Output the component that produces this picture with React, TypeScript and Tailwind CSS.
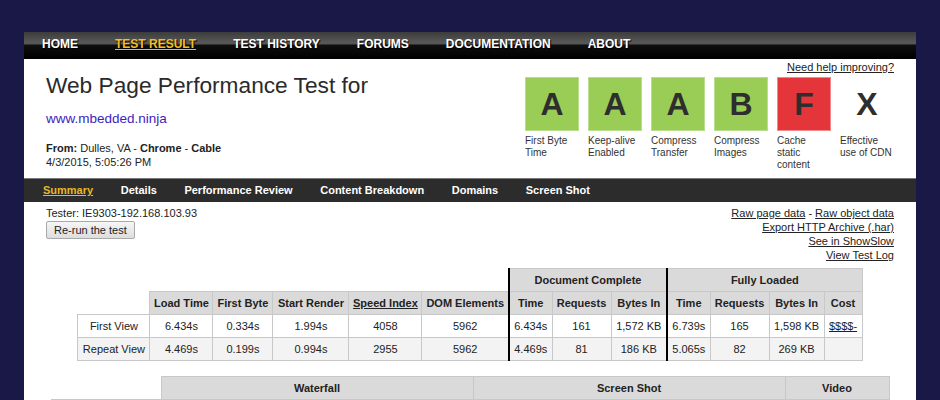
import React from "react";

const topNav = ["HOME", "TEST RESULT", "TEST HISTORY", "FORUMS", "DOCUMENTATION", "ABOUT"];
const subNav = ["Summary", "Details", "Performance Review", "Content Breakdown", "Domains", "Screen Shot"];

const grades = [
  { letter: "A", label: "First Byte Time", tone: "green" },
  { letter: "A", label: "Keep-alive Enabled", tone: "green" },
  { letter: "A", label: "Compress Transfer", tone: "green" },
  { letter: "B", label: "Compress Images", tone: "green" },
  { letter: "F", label: "Cache static content", tone: "red" },
  { letter: "X", label: "Effective use of CDN", tone: "none" },
];

const colWidths = [72, 63, 60, 76, 73, 87, 43, 59, 56, 43, 59, 55, 38];

const rows = [
  {
    name: "First View",
    bg: "bg-white",
    cells: ["6.434s", "0.334s", "1.994s", "4058", "5962", "6.434s", "161", "1,572 KB", "6.739s", "165", "1,598 KB", "$$$$-"],
  },
  {
    name: "Repeat View",
    bg: "bg-[#f3f3f3]",
    cells: ["4.469s", "0.199s", "0.994s", "2955", "5962", "4.469s", "81", "186 KB", "5.065s", "82", "269 KB", ""],
  },
];

const cell = "border border-[#c8c8c8] p-0 text-center";
const thick = "border-l-2 border-l-black";

function GradeBox({ letter, label, tone }: { letter: string; label: string; tone: string }) {
  const box =
    tone === "green"
      ? "bg-[#9acd55] border border-[#b9df8e]"
      : tone === "red"
        ? "bg-[#e4353a] border border-[#f08a8c]"
        : "";
  return (
    <div className="w-[54px]">
      <div className={`w-[54px] h-[54px] flex items-center justify-center text-[32px] font-bold text-[#2e2e2e] ${box}`}>
        {letter}
      </div>
      <div className="mt-[4px] text-[10px] leading-[12px] text-[#333]">{label}</div>
    </div>
  );
}

export default function App() {
  return (
    <div className="h-[400px] overflow-hidden bg-[#1a1846] pt-[32px] pl-[24px] font-['Liberation_Sans',Arial,sans-serif]">
      <div className="w-[892px] bg-white">
        <nav className="h-[27px] bg-[linear-gradient(to_bottom,#3c3c3c_0%,#5a5a5a_42%,#0e0e0e_50%,#000_100%)] pl-[18px] pt-[4px]">
          <ul className="flex gap-[37px] text-[12px] leading-[16px] font-bold [text-shadow:1px_1px_1px_#000]">
            {topNav.map((item) => (
              <li key={item} className={item === "TEST RESULT" ? "text-[#f2be22] underline" : "text-white"}>
                {item}
              </li>
            ))}
          </ul>
        </nav>

        <header className="h-[119px] flex justify-between px-[22px]">
          <div className="pt-[13px] text-[#2a2a2a]">
            <h1 className="text-[22.7px] leading-[26px] font-normal">Web Page Performance Test for</h1>
            <div className="mt-[13px] text-[13.5px] leading-[16px] text-[#3b25bd]">www.mbedded.ninja</div>
            <div className="mt-[14px] text-[11px] leading-[14px] text-[#222]">
              <div>
                <b>From:</b> Dulles, VA - <b>Chrome</b> - <b>Cable</b>
              </div>
              <div>4/3/2015, 5:05:26 PM</div>
            </div>
          </div>
          <div className="pt-[1px] flex flex-col items-end">
            <a className="text-[11px] leading-[14px] text-[#222] underline">Need help improving?</a>
            <div className="mt-[3px] flex gap-[9px]">
              {grades.map((g) => (
                <GradeBox key={g.label} {...g} />
              ))}
            </div>
          </div>
        </header>

        <div className="h-[24px] border-t border-[#7a7a7a] bg-[#2c2c2c] flex items-center pl-[19px] gap-[27.6px] text-[11px] font-bold">
          {subNav.map((item) => (
            <span key={item} className={item === "Summary" ? "text-[#e9b824] underline" : "text-white"}>
              {item}
            </span>
          ))}
        </div>

        <section className="px-[22px] pt-[4px] text-[11px] leading-[14px] text-[#222]">
          <div className="flex justify-between">
            <div>
              <div>Tester: IE9303-192.168.103.93</div>
              <button className="mt-[1px] h-[18px] px-[7px] border border-[#a9a9a9] rounded-[2px] bg-[linear-gradient(to_bottom,#f6f6f6,#dddddd)] text-[11px] leading-[14px] text-[#222]">
                Re-run the test
              </button>
            </div>
            <div className="text-right">
              <div>
                <a className="underline">Raw page data</a> - <a className="underline">Raw object data</a>
              </div>
              <div>
                <a className="underline">Export HTTP Archive (.har)</a>
              </div>
              <div>
                <a className="underline">See in ShowSlow</a>
              </div>
              <div>
                <a className="underline">View Test Log</a>
              </div>
            </div>
          </div>

          <table className="mt-[6px] mx-auto table-fixed border-collapse w-[784px] text-[11px] leading-[14px]">
            <colgroup>
              {colWidths.map((w, i) => (
                <col key={i} style={{ width: w }} />
              ))}
            </colgroup>
            <thead>
              <tr className="h-[23px]">
                <th colSpan={6} className="p-0"></th>
                <th colSpan={3} className={`${cell} ${thick} bg-[#dadada] font-bold`}>
                  Document Complete
                </th>
                <th colSpan={4} className={`${cell} ${thick} bg-[#dadada] font-bold`}>
                  Fully Loaded
                </th>
              </tr>
              <tr className="h-[23px]">
                <th className="p-0"></th>
                {["Load Time", "First Byte", "Start Render", "Speed Index", "DOM Elements", "Time", "Requests", "Bytes In", "Time", "Requests", "Bytes In", "Cost"].map(
                  (h, i) => (
                    <th
                      key={i}
                      className={`${cell} bg-[#dadada] font-bold whitespace-nowrap ${i === 5 || i === 8 ? thick : ""}`}
                    >
                      {h === "Speed Index" ? <span className="underline">{h}</span> : h}
                    </th>
                  )
                )}
              </tr>
            </thead>
            <tbody>
              {rows.map((r) => (
                <tr key={r.name} className={`h-[23px] ${r.bg}`}>
                  <td className={`${cell} whitespace-nowrap`}>{r.name}</td>
                  {r.cells.map((c, i) => (
                    <td key={i} className={`${cell} whitespace-nowrap ${i === 5 || i === 8 ? thick : ""}`}>
                      {c === "$$$$-" ? <a className="underline">{c}</a> : c}
                    </td>
                  ))}
                </tr>
              ))}
            </tbody>
          </table>

          <table className="mt-[15px] mx-auto table-fixed border-collapse w-[838px] text-[11px] leading-[14px]">
            <colgroup>
              <col style={{ width: 110 }} />
              <col style={{ width: 312 }} />
              <col style={{ width: 312 }} />
              <col style={{ width: 104 }} />
            </colgroup>
            <thead>
              <tr className="h-[23px]">
                <th className="p-0"></th>
                <th className={`${cell} bg-[#dadada] font-bold`}>Waterfall</th>
                <th className={`${cell} bg-[#dadada] font-bold`}>Screen Shot</th>
                <th className={`${cell} bg-[#dadada] font-bold`}>Video</th>
              </tr>
            </thead>
            <tbody>
              <tr className="h-[60px]">
                <td className={cell}></td>
                <td className={cell}></td>
                <td className={cell}></td>
                <td className={cell}></td>
              </tr>
            </tbody>
          </table>
        </section>
      </div>
    </div>
  );
}
